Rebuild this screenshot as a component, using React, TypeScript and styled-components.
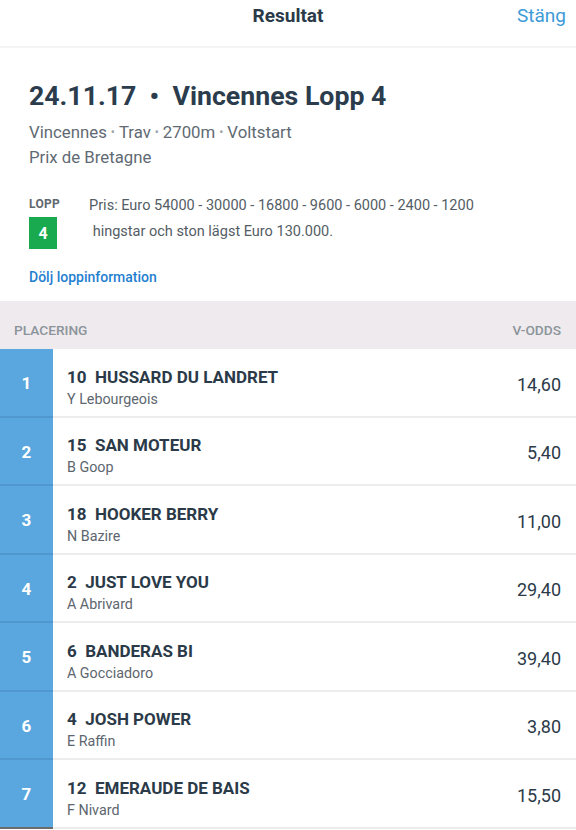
import React from "react";
import styled, { createGlobalStyle } from "styled-components";

const Global = createGlobalStyle`
  html, body { margin: 0; padding: 0; background: #fff; }
  body { font-family: Roboto, "Noto Sans", Arial, sans-serif; -webkit-font-smoothing: antialiased; }
  * { box-sizing: border-box; }
`;

const Page = styled.div`
  width: 576px;
  height: 830px;
  overflow: hidden;
  background: #fff;
`;

const TopBar = styled.header`
  height: 48px;
  display: grid;
  grid-template-columns: 1fr auto 1fr;
  align-items: center;
  padding: 0 10px 2px;
  border-bottom: 2px solid #f4f4f4;
`;

const TopTitle = styled.div`
  grid-column: 2;
  font-size: 19px;
  font-weight: 700;
  color: #2b3a48;
  margin-top: -14px;
`;

const CloseLink = styled.div`
  justify-self: end;
  font-size: 19px;
  color: #3d9ad8;
  margin-top: -14px;
`;

const Info = styled.section`
  padding: 30px 29px 16px;
`;

const RaceTitle = styled.h1`
  margin: 0;
  font-size: 26.7px;
  font-weight: 700;
  color: #2b3c4d;
  line-height: 36px;
`;

const Sub = styled.div`
  margin-top: 6px;
  font-size: 16.8px;
  line-height: 25px;
  color: #5f6a73;
`;

const Dot = styled.span`
  font-size: 12px;
  color: #9aa3aa;
  margin: 0 4px;
  vertical-align: 2px;
`;

const LoppRow = styled.div`
  display: flex;
  margin-top: 27px;
  gap: 29px;
`;

const LoppCol = styled.div`
  display: flex;
  flex-direction: column;
  align-items: flex-start;
  gap: 6px;
`;

const LoppLabel = styled.div`
  font-size: 12px;
  font-weight: 700;
  color: #5f676d;
  letter-spacing: 0.3px;
  line-height: 14px;
`;

const LoppBox = styled.div`
  width: 28px;
  height: 32px;
  background: #19aa4f;
  color: #fff;
  font-weight: 700;
  font-size: 16px;
  display: flex;
  align-items: center;
  justify-content: center;
`;

const Prize = styled.div`
  font-size: 14.5px;
  line-height: 26px;
  color: #545d65;
  margin-top: -4px;
  white-space: pre;
`;

const ToggleLink = styled.div`
  margin-top: 20px;
  font-size: 14px;
  font-weight: 500;
  color: #1f80cf;
`;

const TableHead = styled.div`
  height: 48px;
  background: #efeaed;
  display: flex;
  align-items: center;
  justify-content: space-between;
  padding: 10px 15px 0 14px;
  font-size: 13.7px;
  font-weight: 500;
  color: #8b949b;
`;

const Row = styled.div`
  display: flex;
  height: 68.5px;
  border-bottom: 2px solid #ececec;
`;

const Place = styled.div<{ $bg: string; $line: string }>`
  width: 53px;
  margin-bottom: -2px;
  border-bottom: 2px solid ${(p) => p.$line};
  background: ${(p) => p.$bg};
  color: #fff;
  font-size: 17px;
  font-weight: 700;
  display: flex;
  align-items: center;
  justify-content: center;
  padding-top: 2px;
`;

const Body = styled.div`
  flex: 1;
  display: flex;
  align-items: center;
  padding: 0 15px 0 14px;
`;

const Names = styled.div`
  flex: 1;
  display: flex;
  flex-direction: column;
  gap: 1px;
  padding-top: 11px;
`;

const Horse = styled.div`
  font-size: 17px;
  font-weight: 700;
  color: #2b3a48;
  line-height: 21px;
  white-space: pre;
`;

const Driver = styled.div`
  font-size: 14.3px;
  color: #5d666e;
  line-height: 20px;
`;

const Odds = styled.div`
  font-size: 18px;
  color: #2b3a48;
  padding-top: 4px;
`;

const results = [
  { p: "1", n: "10", h: "HUSSARD DU LANDRET", d: "Y Lebourgeois", o: "14,60" },
  { p: "2", n: "15", h: "SAN MOTEUR", d: "B Goop", o: "5,40" },
  { p: "3", n: "18", h: "HOOKER BERRY", d: "N Bazire", o: "11,00" },
  { p: "4", n: "2", h: "JUST LOVE YOU", d: "A Abrivard", o: "29,40" },
  { p: "5", n: "6", h: "BANDERAS BI", d: "A Gocciadoro", o: "39,40" },
  { p: "6", n: "4", h: "JOSH POWER", d: "E Raffin", o: "3,80" },
  { p: "7", n: "12", h: "EMERAUDE DE BAIS", d: "F Nivard", o: "15,50" },
];

export default function App() {
  return (
    <Page>
      <Global />
      <TopBar>
        <TopTitle>Resultat</TopTitle>
        <CloseLink>Stäng</CloseLink>
      </TopBar>
      <Info>
        <RaceTitle>24.11.17 &nbsp;•&nbsp; Vincennes Lopp 4</RaceTitle>
        <Sub>
          Vincennes<Dot>•</Dot>Trav<Dot>•</Dot>2700m<Dot>•</Dot>Voltstart
          <br />
          Prix de Bretagne
        </Sub>
        <LoppRow>
          <LoppCol>
            <LoppLabel>LOPP</LoppLabel>
            <LoppBox>4</LoppBox>
          </LoppCol>
          <Prize>
            {"Pris: Euro 54000 - 30000 - 16800 - 9600 - 6000 - 2400 - 1200\n hingstar och ston lägst Euro 130.000."}
          </Prize>
        </LoppRow>
        <ToggleLink>Dölj loppinformation</ToggleLink>
      </Info>
      <TableHead>
        <span>PLACERING</span>
        <span>V-ODDS</span>
      </TableHead>
      {results.map((r, i) => (
        <Row key={r.p}>
          <Place $bg="#5aa6de" $line={i === results.length - 1 ? "#6c6c6c" : "#4f97cc"}>{r.p}</Place>
          <Body>
            <Names>
              <Horse>{`${r.n}  ${r.h}`}</Horse>
              <Driver>{r.d}</Driver>
            </Names>
            <Odds>{r.o}</Odds>
          </Body>
        </Row>
      ))}
    </Page>
  );
}
